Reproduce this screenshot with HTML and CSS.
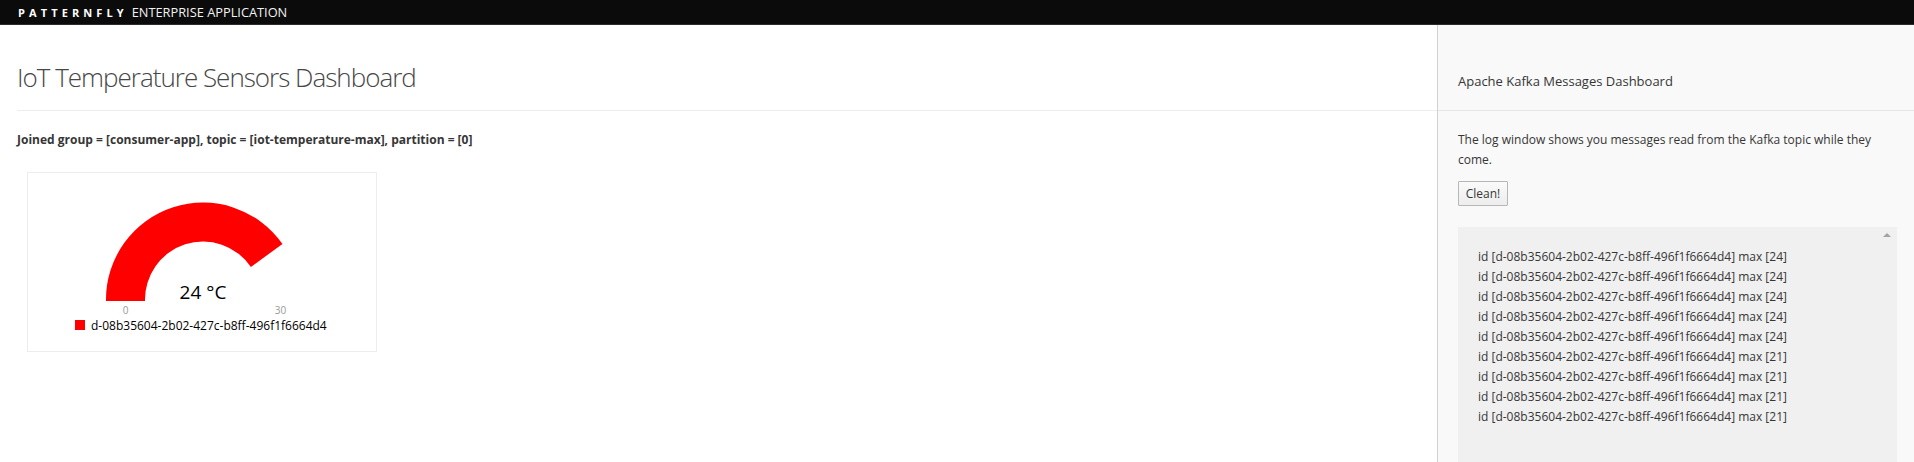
FILE: index.html
```html
<!DOCTYPE html>
<html lang="en">
<head>
<meta charset="utf-8">
<title>IoT Temperature Sensors Dashboard</title>
<link rel="stylesheet" href="styles.css">
</head>
<body>
<header class="navbar">
  <span class="brand-strong">PATTERNFLY</span>
  <span class="brand-light">ENTERPRISE APPLICATION</span>
</header>
<div class="layout">
  <main class="main">
    <div class="page-header">
      <h1 class="title">IoT Temperature Sensors Dashboard</h1>
    </div>
    <p class="joined">Joined group = [consumer-app], topic = [iot-temperature-max], partition = [0]</p>
    <div class="card">
      <svg class="gauge" width="348" height="178" viewBox="0 0 348 178">
        <path d="M78 128 A97 97 0 0 1 254.47 70.98 L222.92 93.91 A58 58 0 0 0 117 128 Z" fill="#ff0000"/>
        <text x="175" y="126" class="gauge-value" text-anchor="middle">24 °C</text>
        <text x="97.5" y="141" class="gauge-label" text-anchor="middle">0</text>
        <text x="252.5" y="141" class="gauge-label" text-anchor="middle">30</text>
        <rect x="47" y="147" width="10" height="10" fill="#ff0000"/>
        <text x="63" y="157" class="legend-text">d-08b35604-2b02-427c-b8ff-496f1f6664d4</text>
      </svg>
    </div>
  </main>
  <aside class="sidebar">
    <div class="side-header">
      <h2 class="side-title">Apache Kafka Messages Dashboard</h2>
    </div>
    <div class="side-body">
      <p class="side-text">The log window shows you messages read from the Kafka topic while they come.</p>
      <button class="btn" type="button">Clean!</button>
      <div class="log">
        <span class="scroll-arrow"></span>
        <div class="log-line">id [d-08b35604-2b02-427c-b8ff-496f1f6664d4] max [24]</div>
        <div class="log-line">id [d-08b35604-2b02-427c-b8ff-496f1f6664d4] max [24]</div>
        <div class="log-line">id [d-08b35604-2b02-427c-b8ff-496f1f6664d4] max [24]</div>
        <div class="log-line">id [d-08b35604-2b02-427c-b8ff-496f1f6664d4] max [24]</div>
        <div class="log-line">id [d-08b35604-2b02-427c-b8ff-496f1f6664d4] max [24]</div>
        <div class="log-line">id [d-08b35604-2b02-427c-b8ff-496f1f6664d4] max [21]</div>
        <div class="log-line">id [d-08b35604-2b02-427c-b8ff-496f1f6664d4] max [21]</div>
        <div class="log-line">id [d-08b35604-2b02-427c-b8ff-496f1f6664d4] max [21]</div>
        <div class="log-line">id [d-08b35604-2b02-427c-b8ff-496f1f6664d4] max [21]</div>
      </div>
    </div>
  </aside>
</div>
</body>
</html>
```
FILE: styles.css
```css
* { box-sizing: border-box; }
html, body { height: 100%; }
body {
  margin: 0;
  font-family: "Open Sans", "Liberation Sans", sans-serif;
  font-size: 12px;
  color: #363636;
  background: #fff;
  overflow: hidden;
}
.navbar {
  height: 25px;
  background: #0b0b0b;
  border-bottom: 1px solid #2b2b2b;
  display: flex;
  align-items: center;
  padding-left: 18px;
  color: #fff;
  font-size: 11px;
  line-height: 1;
}
.brand-strong {
  font-weight: 700;
  letter-spacing: 4.1px;
  margin-right: 4px;
}
.brand-light {
  font-weight: 400;
  font-size: 12.8px;
  color: #f2f2f2;
}
.layout {
  display: flex;
  height: calc(100% - 25px);
}
.main {
  flex: 1;
  padding-left: 17px;
}
.page-header {
  height: 86px;
  border-bottom: 1px solid #ededed;
  display: flex;
  align-items: flex-end;
  padding-bottom: 19px;
}
.title {
  margin: 0;
  font-size: 26px;
  font-weight: 300;
  line-height: 28px;
  letter-spacing: -1px;
  color: #474747;
}
.joined {
  margin: 19px 0 0;
  font-weight: 700;
  line-height: 20px;
  color: #363636;
}
.card {
  margin: 22px 0 0 10px;
  width: 350px;
  height: 180px;
  border: 1px solid #ededed;
  background: #fff;
}
.gauge { display: block; }
.gauge-value {
  font-family: "Open Sans", sans-serif;
  font-size: 19px;
  fill: #000;
}
.gauge-label {
  font-family: "Open Sans", sans-serif;
  font-size: 10px;
  fill: #999;
}
.legend-text {
  font-family: "Open Sans", sans-serif;
  font-size: 12px;
  fill: #000;
}
.sidebar {
  width: 477px;
  flex: none;
  border-left: 1px solid #d1d1d1;
  background: #f9f9f9;
  display: flex;
  flex-direction: column;
}
.side-header {
  height: 86px;
  border-bottom: 1px solid #e5e5e5;
  display: flex;
  align-items: flex-end;
  padding: 0 17px 19px 20px;
}
.side-title {
  margin: 0;
  font-size: 13px;
  font-weight: 400;
  line-height: 20px;
  color: #363636;
}
.side-body {
  flex: 1;
  padding: 19px 17px 0 20px;
  display: flex;
  flex-direction: column;
  align-items: flex-start;
}
.side-text {
  margin: 0;
  line-height: 20px;
}
.btn {
  margin-top: 11px;
  width: 50px;
  height: 25px;
  padding: 0;
  font-family: "Open Sans", sans-serif;
  font-size: 12px;
  color: #363636;
  border: 1px solid #b7b7b7;
  border-radius: 1px;
  background: linear-gradient(#fafafa, #ededed);
}
.log {
  position: relative;
  margin-top: 21px;
  align-self: stretch;
  flex: 1;
  background: #f0f0f0;
  padding: 20px 20px 0;
}
.log-line {
  line-height: 20px;
  color: #363636;
}
.scroll-arrow {
  position: absolute;
  top: 6px;
  right: 6px;
  width: 0;
  height: 0;
  border-left: 4px solid transparent;
  border-right: 4px solid transparent;
  border-bottom: 4px solid #a3a3a3;
}
```
